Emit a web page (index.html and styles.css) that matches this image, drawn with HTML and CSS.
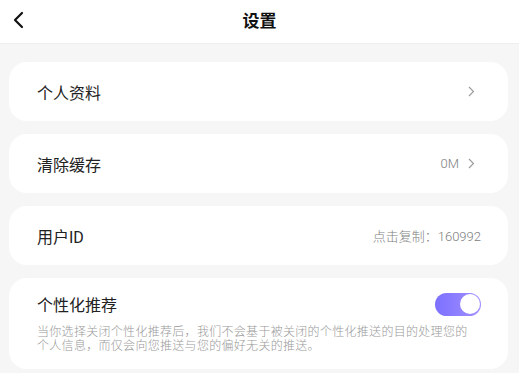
FILE: index.html
```html
<!DOCTYPE html>
<html lang="zh-CN">
<head>
  <meta charset="UTF-8" />
  <meta name="viewport" content="width=device-width, initial-scale=1.0"/>
  <title>设置</title>
  <link rel="stylesheet" href="styles.css">
</head>
<body>
  <div class="nav-bar">
    <span class="nav-back">
      <svg width="12" height="18" viewBox="0 0 12 18"><path d="M10 2 L3 9 L10 16" fill="none" stroke="#111" stroke-width="2.2" stroke-linecap="round" stroke-linejoin="round"/></svg>
    </span>
    <h1 class="nav-title">设置</h1>
  </div>

  <div class="settings-list">
    <div class="setting-card">
      <span class="setting-label">个人资料</span>
      <span class="setting-value">
        <svg class="chevron" width="7" height="11" viewBox="0 0 7 11"><path d="M1 1 L5.5 5.5 L1 10" fill="none" stroke="#999" stroke-width="1.1"/></svg>
      </span>
    </div>

    <div class="setting-card">
      <span class="setting-label">清除缓存</span>
      <span class="setting-value">
        0M
        <svg class="chevron" width="7" height="11" viewBox="0 0 7 11"><path d="M1 1 L5.5 5.5 L1 10" fill="none" stroke="#999" stroke-width="1.1"/></svg>
      </span>
    </div>

    <div class="setting-card">
      <span class="setting-label">用户ID</span>
      <span class="setting-value id-value">点击复制：160992</span>
    </div>

    <div class="setting-card recommend-card">
      <div class="recommend-head">
        <span class="setting-label">个性化推荐</span>
        <span class="toggle on"><span class="toggle-knob"></span></span>
      </div>
      <p class="recommend-desc">当你选择关闭个性化推荐后，我们不会基于被关闭的个性化推送的目的处理您的个人信息，而仅会向您推送与您的偏好无关的推送。</p>
    </div>
  </div>
</body>
</html>
```

FILE: styles.css
```css
body {
  font-family: Roboto, "Noto Sans CJK SC", sans-serif;
  background: #f6f6f6;
  color: #222;
  margin: 0;
}
.nav-bar {
  height: 44px;
  background: #fff;
  border-bottom: 1px solid #efefef;
  display: flex;
  align-items: center;
  justify-content: center;
  position: relative;
  box-sizing: border-box;
}
.nav-back {
  position: absolute;
  left: 12px;
  top: 11px;
  display: flex;
}
.nav-title {
  margin: 0 0 4px;
  font-size: 17px;
  font-weight: bold;
  color: #111;
}
.settings-list {
  padding: 18px 11px 0 9px;
  display: flex;
  flex-direction: column;
  gap: 13px;
}
.setting-card {
  background: #fff;
  border-radius: 18px;
  height: 59px;
  padding: 0 33px 0 28px;
  display: flex;
  align-items: center;
  justify-content: space-between;
}
.setting-label {
  font-size: 16px;
  color: #222;
}
.setting-value {
  font-size: 13px;
  font-weight: 300;
  color: #808080;
  display: flex;
  align-items: center;
  gap: 9px;
}
.id-value {
  margin-right: -6px;
}
.chevron {
  display: block;
}
.recommend-card {
  height: auto;
  display: block;
  padding: 14px 27px 16px 28px;
}
.recommend-head {
  display: flex;
  align-items: center;
  justify-content: space-between;
}
.toggle {
  width: 46px;
  height: 23px;
  border-radius: 12px;
  background: #ccc;
  display: flex;
  align-items: center;
  box-sizing: border-box;
  padding: 0 1.5px;
}
.toggle.on {
  background: linear-gradient(90deg, #7c70ff, #a291ff);
  justify-content: flex-end;
}
.toggle-knob {
  width: 20px;
  height: 20px;
  border-radius: 50%;
  background: #fff;
}
.recommend-desc {
  margin: 9px 0 0;
  padding-right: 8px;
  font-size: 12px;
  font-weight: 300;
  letter-spacing: 0.3px;
  line-height: 14px;
  color: #999;
}
```
